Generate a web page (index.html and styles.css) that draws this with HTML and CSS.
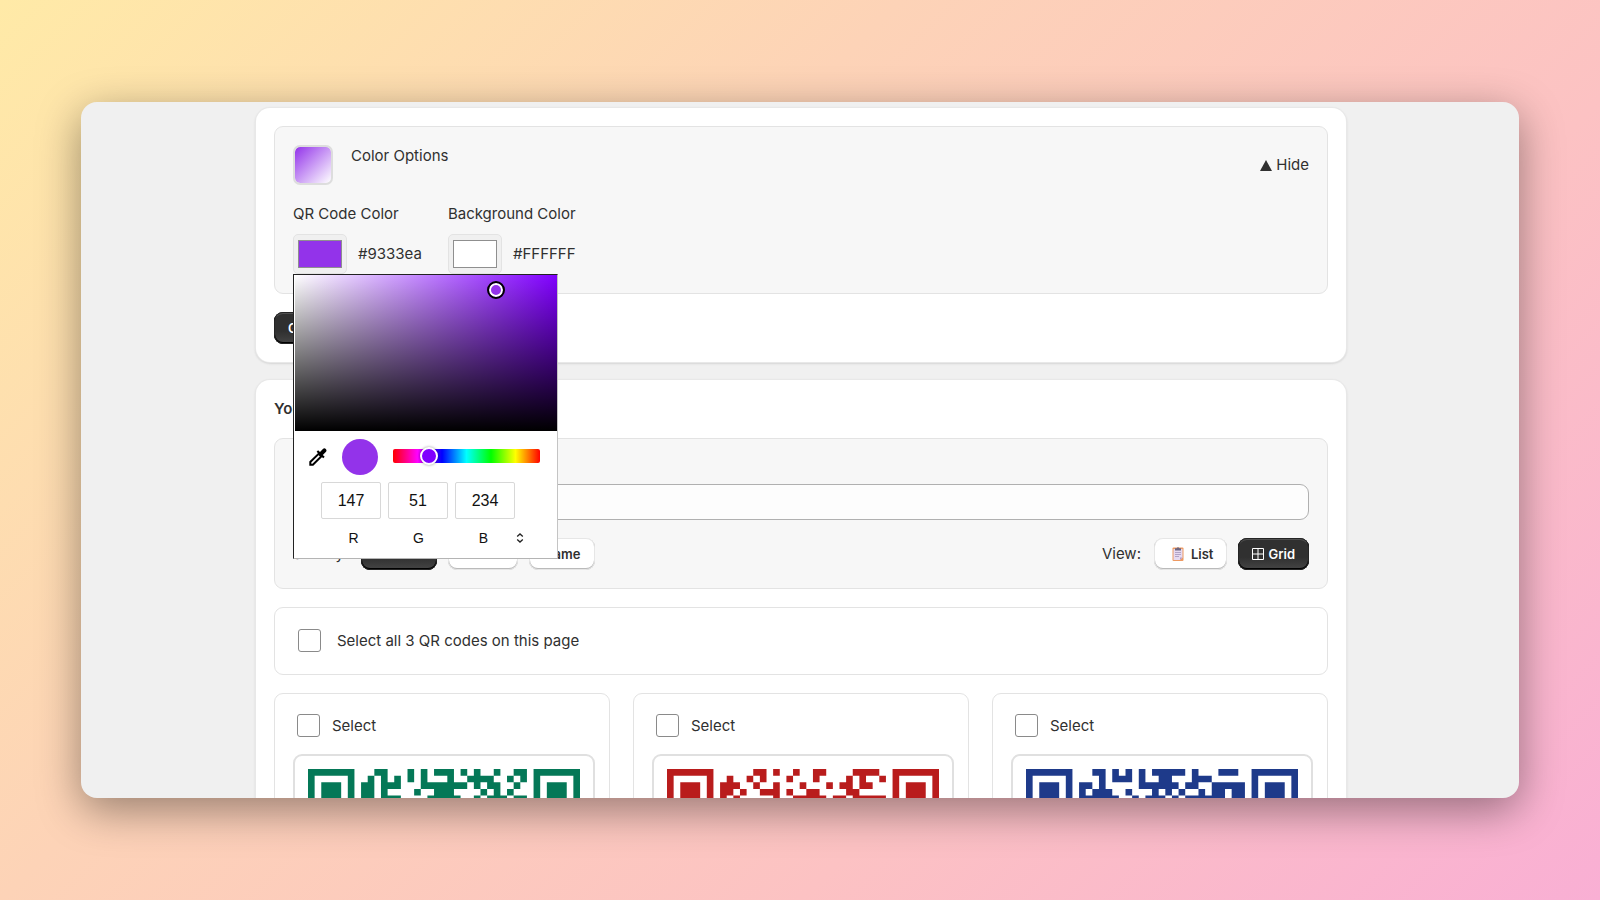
FILE: index.html
```html
<!DOCTYPE html>
<html lang="en">
<head>
<meta charset="utf-8">
<title>QR Codes</title>
<link rel="stylesheet" href="styles.css">
</head>
<body>
<div class="window">
<main class="page">
  <section class="card">
    <div class="panel">
      <div class="options-head">
        <span class="preview"></span>
        <span class="options-title">Color Options</span>
        <button class="toggle" type="button"><svg width="12" height="11" viewBox="0 0 12 11"><path d="M6 0L12 11H0z" fill="currentColor"/></svg>Hide</button>
      </div>
      <div class="fields">
        <div class="field">
          <label for="fg">QR Code Color</label>
          <div class="color-row"><input class="color" id="fg" type="color" value="#9333ea"><span>#9333ea</span></div>
          <div class="picker">
            <div class="spectrum"><span class="spot"></span></div>
            <div class="picker-mid">
              <button class="dropper" type="button" aria-label="Pick a color from the screen"><svg width="18" height="18" viewBox="0 0 18 18"><path d="M1.300 16.700v-2.700L9.600 5.800l2.600 2.600-8.300 8.300z" fill="none" stroke="#000" stroke-width="2"/><path d="M7.600 3.700l1.500-1.500 1.900 1.800 2.900-3q1.500-1.300 2.900 0 1.400 1.500 0 2.900l-3 3 1.900 1.900-1.500 1.500z" fill="#000"/></svg></button>
              <span class="current"></span>
              <div class="hue"><span class="thumb"></span></div>
            </div>
            <div class="channels">
              <input aria-label="Red" value="147"><input aria-label="Green" value="51"><input aria-label="Blue" value="234">
            </div>
            <div class="names"><span>R</span><span>G</span><span>B</span><button class="format" type="button" aria-label="Change color format"><svg width="8" height="10" viewBox="0 0 8 10"><path d="M1.200 3.600L4 1l2.800 2.600M1.200 6.400L4 9l2.800-2.600" fill="none" stroke="#222" stroke-width="1.300"/></svg></button></div>
          </div>
        </div>
        <div class="field">
          <label for="bg">Background Color</label>
          <div class="color-row"><input class="color" id="bg" type="color" value="#ffffff"><span>#FFFFFF</span></div>
        </div>
      </div>
    </div>
    <button class="btn dark" type="button">Generate QR Code</button>
  </section>

  <section class="card">
    <h2>Your QR Codes</h2>
    <div class="panel filters">
      <label for="search">Search</label>
      <input class="search" id="search" type="text">
      <div class="toolbar">
        <span class="tool-label">Sort by:</span>
        <button class="btn dark sort-newest" type="button">Newest</button>
        <button class="btn sort-oldest" type="button">Oldest</button>
        <button class="btn sort-name" type="button">Name</button>
        <span class="tool-label view">View:</span>
        <button class="btn" type="button"><svg class="clip" width="12" height="14" viewBox="0 0 12 14"><rect x=".5" y=".5" width="11" height="13.500" rx="1" fill="#ee9a62"/><path d="M1.500 2h9v8.500l-2.500 2.500h-6.500z" fill="#e6d9f0"/><path d="M8 13v-2.500h2.500z" fill="#b39bc8"/><path d="M3 1.200h1.700q1.300-1.800 2.600 0h1.700v2.200h-6z" fill="#6d6681"/><path d="M3 5.500h6M3 7.500h6M3 9.500h4" stroke="#a596bd" stroke-width=".8"/></svg>List</button>
        <button class="btn dark" type="button"><svg class="grid-icon" width="12" height="12" viewBox="0 0 12 12"><path d="M.5.5h11v11h-11zM6 .5v11M.5 6h11" fill="none" stroke="#fff"/></svg>Grid</button>
      </div>
    </div>
    <label class="select-all"><input class="check" type="checkbox">Select all 3 QR codes on this page</label>
    <div class="codes">
      <article class="code green">
        <label class="pick"><input class="check" type="checkbox">Select</label>
        <div class="frame"><svg viewBox="0 0 41 41"><path class="mods" d="M10 .5h2M15 .5h1M17 .5h1M19 .5h3M23 .5h1M25 .5h1M28 .5h1M31 .5h2M9 1.500h1M11 1.500h1M13 1.500h1M15 1.500h1M17 1.500h1M21 1.500h1M24 1.500h4M30 1.500h1M32 1.500h1M8 2.500h2M11 2.500h3M17 2.500h7M25 2.500h1M27 2.500h2M31 2.500h1M8 3.500h2M11 3.500h1M16 3.500h1M19 3.500h3M26 3.500h1M28 3.500h1M30 3.500h1M8 4.500h2M11 4.500h3M18 4.500h5M25 4.500h1M27 4.500h3M31 4.500h2"/><path class="finder" d="M.5.5h6v6h-6zM34.500.5h6v6h-6zM.5 34.500h6v6h-6z"/><path class="eye" d="M2 2h3v3h-3zM36 2h3v3h-3zM2 36h3v3h-3z"/></svg></div>
      </article>
      <article class="code red">
        <label class="pick"><input class="check" type="checkbox">Select</label>
        <div class="frame"><svg viewBox="0 0 41 41"><path class="mods" d="M13 .5h2M16 .5h1M19 .5h1M22 .5h2M28 .5h4M9 1.500h1M12 1.500h1M14 1.500h1M18 1.500h1M22 1.500h1M27 1.500h1M29 1.500h1M32 1.500h1M8 2.500h3M13 2.500h1M16 2.500h1M20 2.500h1M24 2.500h1M26 2.500h2M29 2.500h2M8 3.500h2M11 3.500h1M14 3.500h3M18 3.500h1M21 3.500h2M27 3.500h2M8 4.500h1M10 4.500h1M16 4.500h1M19 4.500h5M25 4.500h2M28 4.500h5"/><path class="finder" d="M.5.5h6v6h-6zM34.500.5h6v6h-6zM.5 34.500h6v6h-6z"/><path class="eye" d="M2 2h3v3h-3zM36 2h3v3h-3zM2 36h3v3h-3z"/></svg></div>
      </article>
      <article class="code blue">
        <label class="pick"><input class="check" type="checkbox">Select</label>
        <div class="frame"><svg viewBox="0 0 41 41"><path class="mods" d="M10 .5h2M13 .5h1M15 .5h1M17 .5h1M19 .5h5M25 .5h1M29 .5h3M11 1.500h1M13 1.500h3M17 1.500h1M20 1.500h2M25 1.500h3M8 2.500h2M11 2.500h1M17 2.500h6M24 2.500h2M28 2.500h5M8 3.500h1M10 3.500h3M15 3.500h1M19 3.500h1M21 3.500h1M23 3.500h1M26 3.500h1M28 3.500h2M31 3.500h2M8 4.500h6M16 4.500h1M18 4.500h3M22 4.500h1M24 4.500h6M31 4.500h2"/><path class="finder" d="M.5.5h6v6h-6zM34.500.5h6v6h-6zM.5 34.500h6v6h-6z"/><path class="eye" d="M2 2h3v3h-3zM36 2h3v3h-3zM2 36h3v3h-3z"/></svg></div>
      </article>
    </div>
  </section>
</main>
</div>
</body>
</html>
```
FILE: styles.css
```css
* { box-sizing: border-box; }
body {
  margin: 0;
  height: 100vh;
  padding: 102px 81px;
  background: linear-gradient(135deg, #ffeaa7 0%, #fdd3b7 36%, #fcc2c3 68%, #f9afd4 100%);
  font-family: Inter, "Liberation Sans", sans-serif;
  font-size: 15px;
  line-height: 22px;
  color: #303030;
}
button, input { font: inherit; color: inherit; }
svg { display: block; flex: none; }

.window {
  height: 100%;
  overflow: hidden;
  padding-left: 2px;
  border-radius: 16px;
  background: #f0f0f0;
  box-shadow: 0 12px 44px rgba(0, 0, 0, .4);
}
.page {
  max-width: 1090px;
  margin: 0 auto;
  padding-top: 6px;
  display: flex;
  flex-direction: column;
  gap: 18px;
}
.card {
  display: flex;
  flex-direction: column;
  align-items: flex-start;
  gap: 18px;
  padding: 18px;
  border-radius: 14px;
  background: #fff;
  box-shadow: 0 0 0 1px #e8e8e8, 0 1px 2px 1px #d6d6d6;
}
.panel {
  width: 100%;
  padding: 18px;
  border: 1px solid #e3e3e3;
  border-radius: 9px;
  background: #f7f7f7;
}
h2 { margin: 0; font-size: 15px; line-height: 22px; font-weight: 600; }

.options-head { display: flex; gap: 18px; }
.preview {
  width: 40px;
  height: 40px;
  border: 2px solid #ddd;
  border-radius: 7px;
  background: linear-gradient(135deg, #9333ea, #fff) padding-box;
}
.toggle {
  display: flex;
  align-items: center;
  gap: 4px;
  margin-left: auto;
  padding: 0;
  border: 0;
  background: none;
}
.fields { display: flex; gap: 26px; padding: 18px 0 1px; }
.field { position: relative; display: flex; flex-direction: column; gap: 9px; }
.color-row { display: flex; align-items: center; gap: 11px; }
.color {
  width: 54px;
  height: 40px;
  padding: 4px 3px;
  border: 1px solid #e3e3e3;
  border-radius: 5px;
  background: #f0f0f0;
}
.color::-webkit-color-swatch-wrapper { padding: 1px; }
.color::-webkit-color-swatch { border: 1px solid #8f8f8f; border-radius: 0; }

.picker {
  position: absolute;
  top: 71px;
  left: 0;
  z-index: 5;
  width: 265px;
  height: 285px;
  border: 1px solid #222;
  border-right-color: #c4c4c4;
  border-bottom-color: #b4b4b4;
  background: #fff;
  font-family: "Liberation Sans", Arial, sans-serif;
  color: #111;
}
.spectrum {
  position: relative;
  height: 156px;
  margin: 0 0 0 1px;
  background: linear-gradient(to top, #000, transparent), linear-gradient(to right, #fff, #8000ff);
}
.spot {
  position: absolute;
  top: 6px;
  left: 192px;
  width: 18px;
  height: 18px;
  border: 2px solid #000;
  border-radius: 50%;
  background: #9333ea;
  box-shadow: inset 0 0 0 2px #fff;
}
.picker-mid { display: flex; align-items: center; padding: 8px 17px 0 15px; }
.dropper { padding: 0; border: 0; background: none; }
.current { width: 36px; height: 36px; margin: 0 15px; border-radius: 50%; background: #9333ea; }
.hue {
  position: relative;
  flex: 1;
  height: 14px;
  margin-bottom: 2px;
  border-radius: 2px;
  background: linear-gradient(to right, red, #f0f, #00f, #0ff, #0f0, #ff0, red);
}
.thumb {
  position: absolute;
  top: -2px;
  left: 27px;
  width: 18px;
  height: 18px;
  border: 2px solid #fff;
  border-radius: 50%;
  background: #8000ff;
  box-shadow: 0 0 3px rgba(0, 0, 0, .4);
}
.channels { display: flex; gap: 7px; padding: 7px 0 0 27px; }
.channels input {
  width: 60px;
  height: 37px;
  padding: 0;
  border: 1px solid #d8d8d8;
  border-radius: 2px;
  background: #fff;
  font-size: 16px;
  text-align: center;
}
.names { display: flex; padding: 8px 0 0 27px; font-size: 14px; text-align: center; }
.names span { width: 65px; }
.format { padding: 0; border: 0; background: none; }

.btn {
  display: flex;
  align-items: center;
  justify-content: center;
  height: 32px;
  padding: 0 14px;
  border: 0;
  border-radius: 9px;
  background: #fff;
  box-shadow: inset 0 0 0 1px #e6e6e6, inset 0 -1px 0 1px #bababa;
  font-size: 13px;
  font-weight: 600;
}
.btn.dark {
  color: #fff;
  background: linear-gradient(#303030 60%, #454545);
  box-shadow: inset 0 0 0 1px #252525, inset 0 -1px 0 1px #000, inset 0 2px 0 #505050;
}
.filters { display: flex; flex-direction: column; }
.search {
  width: 100%;
  height: 36px;
  margin: 5px 0 18px;
  padding: 0 12px;
  border: 1px solid #b0b0b0;
  border-radius: 9px;
  background: #fdfdfd;
}
.toolbar { display: flex; align-items: center; gap: 11px; }
.tool-label { min-width: 57px; }
.view { min-width: 0; margin-left: auto; margin-right: 2px; }
.sort-newest { width: 76px; }
.sort-oldest { width: 70px; }
.sort-name { width: 66px; }
.clip { margin: 0 7px 0 4px; }
.grid-icon { margin-right: 4px; }

.select-all {
  display: flex;
  align-items: center;
  gap: 16px;
  width: 100%;
  padding: 21px 23px 22px;
  border: 1px solid #e3e3e3;
  border-radius: 9px;
}
.check {
  appearance: none;
  flex: none;
  width: 23px;
  height: 23px;
  margin: 0;
  border: 1px solid #8a8a8a;
  border-radius: 3px;
  background: #fff;
}
.codes {
  display: grid;
  grid-template-columns: repeat(3, 1fr);
  gap: 23px;
  width: 100%;
}
.code { padding: 18px 14px 18px 18px; border: 1px solid #e3e3e3; border-radius: 9px; }
.pick { display: flex; align-items: center; gap: 12px; padding: 2px 4px 17px; }
.frame { padding: 13px; border: 2px solid #e0e0e0; border-radius: 9px; }
.mods, .finder { fill: none; stroke: currentColor; }
.eye { fill: currentColor; }
.green svg { color: #047857; }
.red svg { color: #b91c1c; }
.blue svg { color: #1e3a8a; }
```
